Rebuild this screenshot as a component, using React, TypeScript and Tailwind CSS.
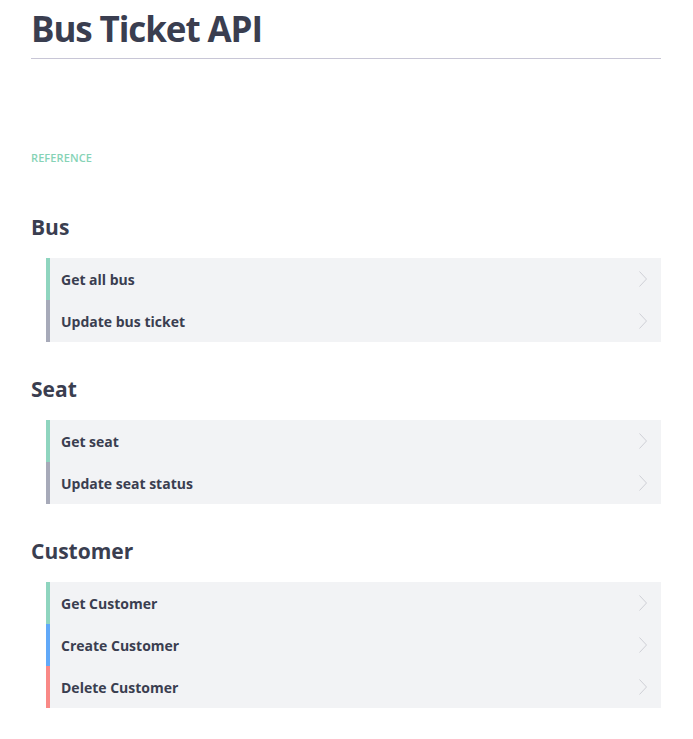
import React from "react";

type Item = { label: string; color: string };

const sections: { title: string; items: Item[] }[] = [
  {
    title: "Bus",
    items: [
      { label: "Get all bus", color: "border-[#8fd5bf]" },
      { label: "Update bus ticket", color: "border-[#a7aab9]" },
    ],
  },
  {
    title: "Seat",
    items: [
      { label: "Get seat", color: "border-[#8fd5bf]" },
      { label: "Update seat status", color: "border-[#a7aab9]" },
    ],
  },
  {
    title: "Customer",
    items: [
      { label: "Get Customer", color: "border-[#8fd5bf]" },
      { label: "Create Customer", color: "border-[#61a9f8]" },
      { label: "Delete Customer", color: "border-[#f98986]" },
    ],
  },
];

function Chevron() {
  return (
    <svg width="10" height="18" viewBox="0 0 10 18" fill="none" className="shrink-0">
      <path d="M1.5 1.5 L8.5 9 L1.5 16.5" stroke="#cfd0d6" strokeWidth="1" />
    </svg>
  );
}

export default function App() {
  return (
    <div
      className="bg-white min-h-[739px] pl-[31px] pr-[32px] text-[#3a3e50]"
      style={{ fontFamily: '"Open Sans", "Noto Sans", sans-serif' }}
    >
      <h1 className="text-[35px] font-bold leading-[58px] border-b border-[#c8c6d6] tracking-[-1.1px]">
        Bus Ticket API
      </h1>
      <div className="pt-[91px] text-[11px] font-semibold tracking-[0.1px] text-[#86d3b6] leading-[16px]">
        REFERENCE
      </div>
      <div className="mt-[45px] flex flex-col gap-[31px]">
        {sections.map((s) => (
          <div key={s.title}>
            <h2 className="text-[21px] font-bold leading-[32px] mb-[15px]">{s.title}</h2>
            <div className="ml-[15px] flex flex-col">
              {s.items.map((it) => (
                <div
                  key={it.label}
                  className={`h-[42px] bg-[#f2f3f5] border-l-4 ${it.color} flex items-center justify-between pl-[11px] pr-[13px]`}
                >
                  <span className="text-[14px] font-bold">{it.label}</span>
                  <Chevron />
                </div>
              ))}
            </div>
          </div>
        ))}
      </div>
    </div>
  );
}
